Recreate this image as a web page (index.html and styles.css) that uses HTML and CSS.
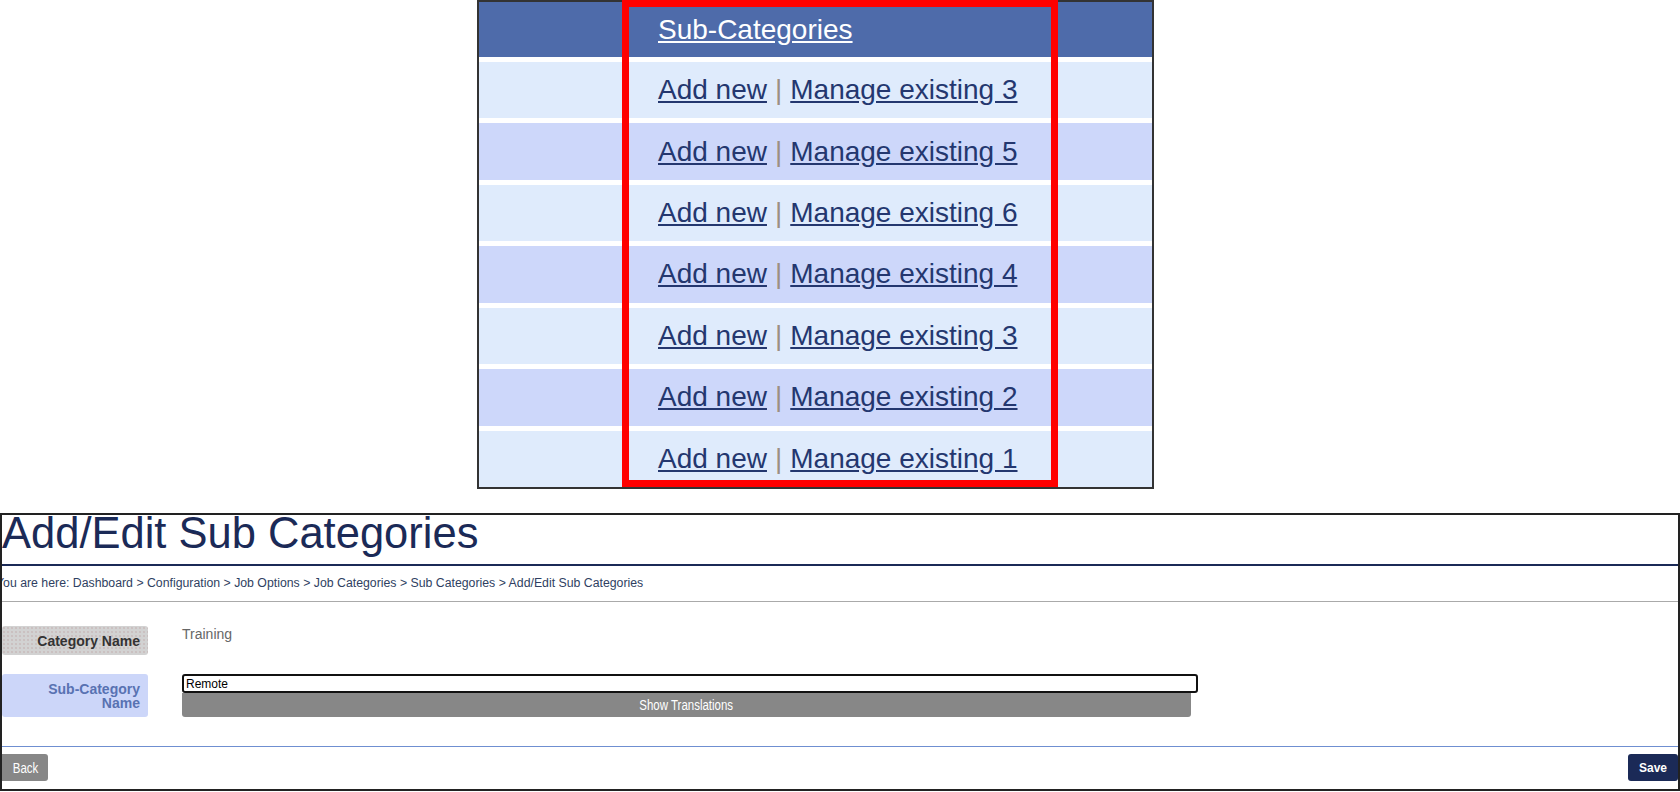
FILE: index.html
```html
<!DOCTYPE html>
<html lang="en">
<head>
  <meta charset="UTF-8">
  <meta name="viewport" content="width=device-width, initial-scale=1.0">
  <title>Add/Edit Sub Categories</title>
  <link rel="stylesheet" href="styles.css">
</head>
<body>
  <!-- Category list with the sub-category column highlighted -->
  <div class="summary">
    <div class="summary-grid">
      <div class="summary-row head"><a href="#">Sub-Categories</a></div>
      <div class="summary-row light"><a href="#">Add new</a><span class="sep">|</span><a href="#">Manage existing 3</a></div>
      <div class="summary-row dark"><a href="#">Add new</a><span class="sep">|</span><a href="#">Manage existing 5</a></div>
      <div class="summary-row light"><a href="#">Add new</a><span class="sep">|</span><a href="#">Manage existing 6</a></div>
      <div class="summary-row dark"><a href="#">Add new</a><span class="sep">|</span><a href="#">Manage existing 4</a></div>
      <div class="summary-row light"><a href="#">Add new</a><span class="sep">|</span><a href="#">Manage existing 3</a></div>
      <div class="summary-row dark"><a href="#">Add new</a><span class="sep">|</span><a href="#">Manage existing 2</a></div>
      <div class="summary-row light"><a href="#">Add new</a><span class="sep">|</span><a href="#">Manage existing 1</a></div>
    </div>
    <div class="highlight"></div>
  </div>

  <!-- Edit form -->
  <div class="panel">
    <h1 class="page-title">Add/Edit Sub Categories</h1>
    <div class="breadcrumb">
      <span>You are here: Dashboard &gt; Configuration &gt; Job Options &gt; Job Categories &gt; Sub Categories &gt; Add/Edit Sub Categories</span>
    </div>

    <div class="form">
      <div class="form-row">
        <div class="label label-grey">Category Name</div>
        <div class="value">Training</div>
      </div>
      <div class="form-row">
        <div class="label label-blue">Sub-Category Name</div>
        <div class="field">
          <input class="text-input" type="text" value="Remote">
          <button class="translations" type="button"><span>Show Translations</span></button>
        </div>
      </div>
    </div>

    <div class="actions">
      <button class="btn btn-back" type="button"><span>Back</span></button>
      <button class="btn btn-save" type="button">Save</button>
    </div>
  </div>
</body>
</html>
```

FILE: styles.css
```css
body {
  margin: 0;
  font-family: "Liberation Sans", Arial, sans-serif;
  background-color: #fff;
}

/* Top list */
.summary {
  position: relative;
  width: 677px;
  margin-left: 477px;
}

.summary-grid {
  display: grid;
  grid-template-rows: 55px repeat(7, 1fr);
  row-gap: 5px;
  height: 485px;
  border: 2px solid #333;
}

.summary-row {
  display: flex;
  align-items: center;
  padding-left: 179px;
  font-size: 28px;
}

.summary-row a {
  color: #24376f;
}

.summary-row.head {
  background-color: #4e6baa;
}

.summary-row.head a {
  color: #fff;
}

.summary-row.light {
  background-color: #dfebfc;
}

.summary-row.dark {
  background-color: #cdd7fa;
}

.sep {
  color: #9c8f84;
  margin: 0 8px;
}

/* Red marker drawn over the list */
.highlight {
  position: absolute;
  top: 0;
  left: 145px;
  width: 422px;
  height: 473px;
  border: 7px solid #ff0000;
}

/* Form panel */
.panel {
  margin-top: 24px;
  border: 2px solid #222;
}

.page-title {
  margin: 0;
  padding-bottom: 13px;
  font-size: 43.5px;
  font-weight: normal;
  line-height: 36px;
  color: #1b2a57;
  border-bottom: 2px solid #1b2a57;
}

.breadcrumb {
  height: 35px;
  overflow: hidden;
  font-size: 12.3px;
  line-height: 35px;
  color: #2f3f62;
  border-bottom: 1px solid #aaa;
  white-space: nowrap;
}

.breadcrumb span {
  margin-left: -6px;
}

.form {
  padding: 24px 0 29px;
  display: flex;
  flex-direction: column;
  gap: 19px;
  border-bottom: 1px solid #6f8fd1;
}

.form-row {
  display: flex;
  align-items: flex-start;
  gap: 34px;
}

.label {
  width: 146px;
  box-sizing: border-box;
  display: flex;
  align-items: center;
  justify-content: flex-end;
  padding-right: 8px;
  border-radius: 3px;
  font-size: 14px;
  font-weight: bold;
  line-height: 14px;
  text-align: right;
}

.label-grey {
  height: 29px;
  color: #333;
  background-color: #d2d2d2;
  background-image: radial-gradient(#c6b7b7 0.6px, transparent 0.9px);
  background-size: 4px 4px;
}

.label-blue {
  height: 43px;
  padding-left: 40px;
  color: #5872b2;
  background-color: #ccd6f9;
}

.value {
  font-size: 14px;
  line-height: 16px;
  color: #666;
}

.field {
  display: flex;
  flex-direction: column;
}

.text-input {
  width: 1016px;
  height: 19px;
  box-sizing: border-box;
  margin: 0;
  padding: 0 2px;
  border: 2px solid #111;
  border-radius: 3px;
  font-family: "Liberation Sans", Arial, sans-serif;
  font-size: 12px;
  color: #000;
}

.translations {
  width: 1009px;
  height: 24px;
  margin: 0;
  padding: 0;
  border: 0;
  border-radius: 0 0 3px 3px;
  background-color: #878787;
  color: #fff;
  font-family: "Liberation Sans", Arial, sans-serif;
  font-size: 14px;
}

/* narrow lettering like the original button font */
.translations span,
.btn-back span {
  display: inline-block;
  transform: scaleX(0.82);
}

.actions {
  display: flex;
  justify-content: space-between;
  padding: 7px 0 8px;
}

.btn {
  height: 27px;
  border: 0;
  border-radius: 3px;
  color: #fff;
  font-family: "Liberation Sans", Arial, sans-serif;
  font-size: 12px;
  font-weight: bold;
}

.btn-back {
  width: 46px;
  padding: 0 0 0 2px;
  border-radius: 0 3px 3px 0;
  background-color: #878787;
  font-size: 14px;
  font-weight: normal;
}

.btn-save {
  width: 50px;
  padding: 0;
  background-color: #1b2a57;
}
```
